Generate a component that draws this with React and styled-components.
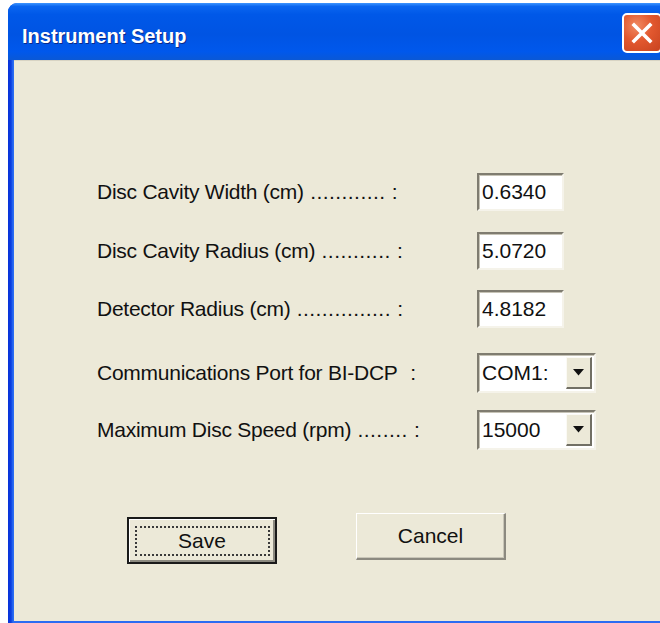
import React from "react";
import styled, { createGlobalStyle } from "styled-components";

const Global = createGlobalStyle`
  html, body {
    margin: 0;
    padding: 0;
    background: #ffffff;
    overflow: hidden;
  }
  #root {
    width: 660px;
    height: 623px;
    overflow: hidden;
  }
`;

const Window = styled.div`
  margin: 3px 0 0 8px;
  width: 680px;
  height: 620px;
  display: flex;
  flex-direction: column;
  border-radius: 9px 9px 0 0;
  overflow: hidden;
  background: #0b46d8;
`;

const TitleBar = styled.div`
  height: 57px;
  flex: none;
  display: flex;
  align-items: flex-start;
  justify-content: space-between;
  padding: 0 26px 0 14px;
  background: linear-gradient(
    to bottom,
    #3d95ff 0%,
    #0a66f0 6%,
    #0058e8 20%,
    #0054e3 55%,
    #0058ec 85%,
    #0a58d6 100%
  );
`;

const Title = styled.span`
  font-family: "Liberation Sans", Arial, sans-serif;
  font-weight: bold;
  font-size: 20px;
  line-height: 24px;
  color: #ffffff;
  text-shadow: 1px 1px 0 #0a2a8a;
  margin-top: 21px;
`;

const CloseButton = styled.div`
  width: 40px;
  height: 40px;
  margin-top: 10px;
  box-sizing: border-box;
  border: 2px solid #ffffff;
  border-radius: 5px;
  background: radial-gradient(circle at 35% 30%, #f08a62 0%, #e2582f 45%, #c8431f 100%);
  display: flex;
  align-items: center;
  justify-content: flex-start;
  padding-left: 7px;
`;

const Frame = styled.div`
  flex: 1;
  display: flex;
  padding: 0 0 2px 6px;
  background: linear-gradient(to right, #0831d9 0px, #0a3fe0 3px, #2a6cf2 5px, #2a6cf2 6px);
`;

const Content = styled.div`
  flex: 1;
  background: #ece9d8;
  border-top: 1px solid #d8d4c4;
  padding: 112px 0 0 83px;
  display: flex;
  flex-direction: column;
`;

const Row = styled.div`
  display: flex;
  align-items: center;
  margin-top: ${(p) => p.$gap || 0}px;
`;

const Label = styled.span`
  width: 380px;
  font-family: "Liberation Sans", Arial, sans-serif;
  font-size: 21px;
  letter-spacing: -0.25px;
  color: #111111;
  white-space: pre;
`;

/* dotted leader between a label and its colon */
const Leader = styled.span`
  letter-spacing: 0.45px;
`;

const sunken = `
  box-sizing: border-box;
  background: #ffffff;
  border-style: solid;
  border-width: 2px;
  border-color: #7f7c70 #f5f3ea #f5f3ea #7f7c70;
  box-shadow: inset 1px 1px 0 #c6c3b6;
`;

const TextBox = styled.div`
  ${sunken}
  width: 87px;
  height: 38px;
  display: flex;
  align-items: center;
  padding-left: 3px;
  font-family: "Liberation Sans", Arial, sans-serif;
  font-size: 21px;
  color: #111111;
`;

const Combo = styled.div`
  ${sunken}
  width: 119px;
  height: 40px;
  display: flex;
  align-items: stretch;
  padding: 2px;
`;

const ComboValue = styled.span`
  flex: 1;
  display: flex;
  align-items: center;
  padding-left: 1px;
  font-family: "Liberation Sans", Arial, sans-serif;
  font-size: 21px;
  color: #111111;
`;

const ComboArrow = styled.div`
  width: 26px;
  box-sizing: border-box;
  background: #ece9d8;
  border-style: solid;
  border-width: 1px 2px 2px 1px;
  border-color: #fbfaf5 #716f64 #716f64 #fbfaf5;
  display: flex;
  align-items: center;
  justify-content: center;
`;

const ButtonRow = styled.div`
  display: flex;
  align-items: flex-start;
  margin: 63px 0 0 30px;
  gap: 79px;
`;

const Button = styled.div`
  width: 150px;
  height: 47px;
  box-sizing: border-box;
  background: #ece9d8;
  display: flex;
  align-items: center;
  justify-content: center;
  font-family: "Liberation Sans", Arial, sans-serif;
  font-size: 21px;
  color: #111111;
  margin-top: ${(p) => (p.$default ? 4 : 0)}px;
  border-style: solid;
  border-width: ${(p) => (p.$default ? "2px" : "1px 2px 2px 1px")};
  border-color: ${(p) =>
    p.$default ? "#1a1a1a" : "#ffffff #8c8a80 #8c8a80 #ffffff"};
  box-shadow: ${(p) =>
    p.$default
      ? "inset 1px 1px 0 #ffffff, inset -2px -2px 0 #8c8a80"
      : "inset -1px -1px 0 #c9c6b8"};
`;

const FocusRing = styled.span`
  width: 135px;
  height: 30px;
  box-sizing: border-box;
  border: 2px dotted #3a3a3a;
  display: flex;
  align-items: center;
  justify-content: center;
`;

const fields = [
  { text: "Disc Cavity Width (cm)", leader: " ............ :", value: "0.6340", gap: 0 },
  { text: "Disc Cavity Radius (cm)", leader: " ........... :", value: "5.0720", gap: 21 },
  { text: "Detector Radius (cm)", leader: " ............... :", value: "4.8182", gap: 20 },
];

const combos = [
  { text: "Communications Port for BI-DCP", leader: "  :", value: "COM1:", gap: 25 },
  { text: "Maximum Disc Speed (rpm)", leader: " ........ :", value: "15000", gap: 17 },
];

const Arrow = () => (
  <svg width="11" height="7" viewBox="0 0 11 7">
    <path d="M0 0 H11 L5.5 6.5 Z" fill="#111" />
  </svg>
);

const CloseGlyph = () => (
  <svg width="22" height="22" viewBox="0 0 22 22">
    <path d="M3 3 L19 19 M19 3 L3 19" stroke="#fff" strokeWidth="3.6" strokeLinecap="square" />
  </svg>
);

export default function App() {
  return (
    <>
      <Global />
      <Window>
        <TitleBar>
          <Title>Instrument Setup</Title>
          <CloseButton>
            <CloseGlyph />
          </CloseButton>
        </TitleBar>
        <Frame>
          <Content>
            {fields.map((f) => (
              <Row key={f.text} $gap={f.gap}>
                <Label>
                  {f.text}
                  <Leader>{f.leader}</Leader>
                </Label>
                <TextBox>{f.value}</TextBox>
              </Row>
            ))}
            {combos.map((c) => (
              <Row key={c.text} $gap={c.gap}>
                <Label>
                  {c.text}
                  <Leader>{c.leader}</Leader>
                </Label>
                <Combo>
                  <ComboValue>{c.value}</ComboValue>
                  <ComboArrow>
                    <Arrow />
                  </ComboArrow>
                </Combo>
              </Row>
            ))}
            <ButtonRow>
              <Button $default>
                <FocusRing>Save</FocusRing>
              </Button>
              <Button>Cancel</Button>
            </ButtonRow>
          </Content>
        </Frame>
      </Window>
    </>
  );
}
